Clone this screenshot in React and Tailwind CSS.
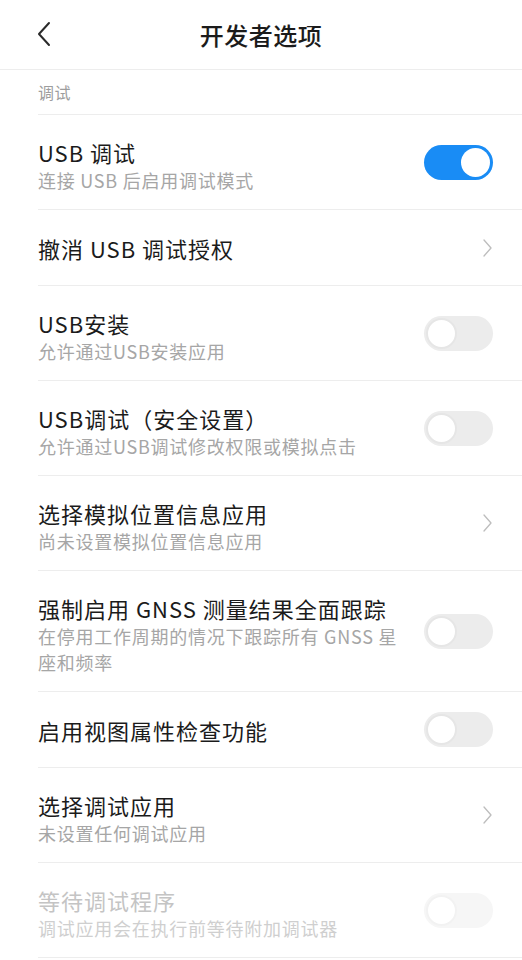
import React from "react";

const FONT = { fontFamily: '"Noto Sans CJK SC", "Noto Sans", sans-serif' };

function Toggle({ on, disabled }) {
  if (on) {
    return (
      <div className="relative h-[35px] w-[69px] shrink-0 rounded-full bg-[#198cf5]">
        <div className="absolute right-[3px] top-[3px] h-[29px] w-[29px] rounded-full bg-white" />
      </div>
    );
  }
  return (
    <div
      className={
        "relative h-[35px] w-[69px] shrink-0 rounded-full " +
        (disabled ? "bg-[#f6f6f6]" : "bg-[#ececec]")
      }
    >
      <div
        className={
          "absolute left-[2px] top-[2px] h-[31px] w-[31px] rounded-full bg-white border-2 " +
          (disabled ? "border-[#f2f2f2]" : "border-[#e6e6e6]")
        }
      />
    </div>
  );
}

function Chevron() {
  return (
    <svg width="12" height="20" viewBox="0 0 12 20" className="shrink-0">
      <path d="M3 2 L10 10 L3 18" fill="none" stroke="#bdbdbd" strokeWidth="1.3" strokeLinecap="round" strokeLinejoin="round" />
    </svg>
  );
}

function Row({ title, sub, right, disabled }) {
  const titleColor = disabled ? "text-[#c4c4c4]" : "text-[#1b1b1b]";
  const subColor = disabled ? "text-[#cfcfcf]" : "text-[#a6a6a6]";
  return (
    <div className="ml-[38px] flex items-center border-b border-[#ededed] pr-[29px]">
      <div className={"flex-1 pr-[14px] " + (sub ? "pt-[22px] pb-[16px]" : "pt-[23px] pb-[22px]")}>
        <div className={"text-[22px] leading-[30px] tracking-[1px] " + titleColor}>{title}</div>
        {sub && (
          <div className={"text-[18px] leading-[26px] tracking-[0.75px] " + subColor}>{sub}</div>
        )}
      </div>
      {right}
    </div>
  );
}

export default function App() {
  return (
    <div className="min-h-[960px] w-[522px] bg-white" style={FONT}>
      <div className="relative flex h-[70px] items-center justify-center border-b border-[#ededed]">
        <svg
          width="16"
          height="26"
          viewBox="0 0 16 26"
          className="absolute left-[36px] top-[21px]"
        >
          <path d="M13 2 L3 13 L13 24" fill="none" stroke="#2a2a2a" strokeWidth="2" strokeLinecap="round" strokeLinejoin="round" />
        </svg>
        <div className="text-[24px] font-medium tracking-[0.5px] text-[#1b1b1b]">开发者选项</div>
      </div>
      <div className="ml-[38px] flex h-[45px] items-center border-b border-[#ededed] text-[16px] tracking-[0.5px] text-[#9d9d9d]">
        调试
      </div>
      <Row title="USB 调试" sub="连接 USB 后启用调试模式" right={<Toggle on />} />
      <Row title="撤消 USB 调试授权" right={<Chevron />} />
      <Row title="USB安装" sub="允许通过USB安装应用" right={<Toggle />} />
      <Row title="USB调试（安全设置）" sub="允许通过USB调试修改权限或模拟点击" right={<Toggle />} />
      <Row title="选择模拟位置信息应用" sub="尚未设置模拟位置信息应用" right={<Chevron />} />
      <Row
        title="强制启用 GNSS 测量结果全面跟踪"
        sub="在停用工作周期的情况下跟踪所有 GNSS 星座和频率"
        right={<Toggle />}
      />
      <Row title="启用视图属性检查功能" right={<Toggle />} />
      <Row title="选择调试应用" sub="未设置任何调试应用" right={<Chevron />} />
      <Row title="等待调试程序" sub="调试应用会在执行前等待附加调试器" right={<Toggle disabled />} disabled />
    </div>
  );
}
